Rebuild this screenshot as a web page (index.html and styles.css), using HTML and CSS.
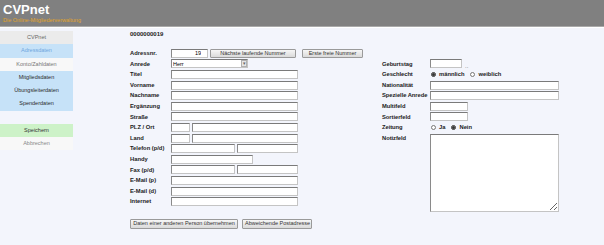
FILE: index.html
```html
<!DOCTYPE html>
<html lang="de">
<head>
    <meta charset="UTF-8">
    <meta name="viewport" content="width=device-width, initial-scale=1.0">
    <title>CVPnet - Adressdaten</title>
    <link rel="stylesheet" href="styles.css">
</head>
<body>
    <header class="topbar">
        <div class="brand">CVPnet</div>
        <div class="tagline">Die Online-Mitgliederverwaltung</div>
    </header>
    <div class="page">
        <nav class="sidemenu">
            <a class="menu-item menu-home">CVPnet</a>
            <a class="menu-item menu-active">Adressdaten</a>
            <a class="menu-item menu-plain">Konto/Zahldaten</a>
            <a class="menu-item menu-blue">Mitgliedsdaten</a>
            <a class="menu-item menu-blue">Übungsleiterdaten</a>
            <a class="menu-item menu-blue">Spenderdaten</a>
            <div class="menu-gap"></div>
            <a class="menu-item menu-save">Speichern</a>
            <a class="menu-item menu-cancel">Abbrechen</a>
        </nav>
        <main class="content">
            <div class="record-id">0000000019</div>
            <form class="form-grid">
                <label class="lbl c1">Adressnr.</label>
                <div class="field wide-row">
                    <input type="text" class="inp w-nr" value="19">
                    <button type="button" class="btn w-next">Nächste laufende Nummer</button>
                    <button type="button" class="btn w-free">Erste freie Nummer</button>
                </div>

                <label class="lbl c1">Anrede</label>
                <div class="field c2">
                    <span class="select-box">
                        <select class="inp w-select">
                            <option>Herr</option>
                            <option>Frau</option>
                        </select>
                        <span class="select-arrow">▾</span>
                    </span>
                </div>
                <label class="lbl c3">Geburtstag</label>
                <div class="field c4"><input type="text" class="inp w-date"><span class="dots">..</span></div>

                <label class="lbl c1">Titel</label>
                <div class="field c2"><input type="text" class="inp w-full"></div>
                <label class="lbl c3">Geschlecht</label>
                <div class="field c4">
                    <input type="radio" name="sex" checked><span class="opt">männlich</span>
                    <input type="radio" name="sex"><span class="opt">weiblich</span>
                </div>

                <label class="lbl c1">Vorname</label>
                <div class="field c2"><input type="text" class="inp w-full"></div>
                <label class="lbl c3">Nationalität</label>
                <div class="field c4"><input type="text" class="inp w-right"></div>

                <label class="lbl c1">Nachname</label>
                <div class="field c2"><input type="text" class="inp w-full"></div>
                <label class="lbl c3">Spezielle Anrede</label>
                <div class="field c4"><input type="text" class="inp w-right"></div>

                <label class="lbl c1">Ergänzung</label>
                <div class="field c2"><input type="text" class="inp w-full"></div>
                <label class="lbl c3">Multifeld</label>
                <div class="field c4"><input type="text" class="inp w-short"></div>

                <label class="lbl c1">Straße</label>
                <div class="field c2"><input type="text" class="inp w-full"></div>
                <label class="lbl c3">Sortierfeld</label>
                <div class="field c4"><input type="text" class="inp w-short"></div>

                <label class="lbl c1">PLZ / Ort</label>
                <div class="field c2"><input type="text" class="inp w-zip"><input type="text" class="inp w-city"></div>
                <label class="lbl c3">Zeitung</label>
                <div class="field c4">
                    <input type="radio" name="paper"><span class="opt">Ja</span>
                    <input type="radio" name="paper" checked><span class="opt">Nein</span>
                </div>

                <label class="lbl c1">Land</label>
                <div class="field c2"><input type="text" class="inp w-zip"><input type="text" class="inp w-city"></div>
                <label class="lbl c3">Notizfeld</label>
                <textarea class="notes"></textarea>

                <label class="lbl c1">Telefon (p/d)</label>
                <div class="field c2"><input type="text" class="inp w-half"><input type="text" class="inp w-half2"></div>

                <label class="lbl c1">Handy</label>
                <div class="field c2"><input type="text" class="inp w-mobile"></div>

                <label class="lbl c1">Fax (p/d)</label>
                <div class="field c2"><input type="text" class="inp w-half"><input type="text" class="inp w-half2"></div>

                <label class="lbl c1">E-Mail (p)</label>
                <div class="field c2"><input type="text" class="inp w-full"></div>

                <label class="lbl c1">E-Mail (d)</label>
                <div class="field c2"><input type="text" class="inp w-full"></div>

                <label class="lbl c1">Internet</label>
                <div class="field c2"><input type="text" class="inp w-full"></div>
            </form>
            <div class="bottom-buttons">
                <button type="button" class="btn w-copy">Daten einer anderen Person übernehmen</button>
                <button type="button" class="btn w-post">Abweichende Postadresse</button>
            </div>
        </main>
    </div>
</body>
</html>
```

FILE: styles.css
```css
body { margin: 0; background: #f3f5fc; font-family: "Liberation Sans", Arial, sans-serif; color: #222; }

/* header */
.topbar { background: #808080; height: 26px; border-bottom: 1px solid #a9a9a9; box-shadow: 0 1px 0 #fff; padding-left: 3px; }
.brand { color: #fff; font-weight: bold; font-size: 13px; line-height: 14px; padding-top: 3px; }
.tagline { color: #e0a428; font-size: 5.5px; line-height: 7px; }

.page { display: flex; padding-top: 4px; }

/* left menu */
.sidemenu { width: 73px; display: flex; flex-direction: column; flex-shrink: 0; }
.menu-item { height: 13.3px; line-height: 13.3px; text-align: center; font-size: 5.5px; color: #333; }
.menu-home { background: #ebebeb; color: #666; }
.menu-active { background: #c6e2f8; color: #6fa6de; }
.menu-plain { background: #f8f8f8; color: #777; }
.menu-blue { background: #c6e2f8; color: #2a2a2a; }
.menu-gap { height: 13px; }
.menu-save { background: #cdf2c8; color: #333; }
.menu-cancel { background: #f8f8f8; color: #888; }

/* form */
.content { margin-left: 57px; }
.record-id { font-weight: bold; font-size: 6px; line-height: 7px; }
.form-grid { display: grid; grid-template-columns: 41px 211px 48px 129px; grid-template-rows: repeat(15, 10.6px); margin-top: 10px; }
.lbl { font-weight: bold; font-size: 5.8px; line-height: 10.6px; white-space: nowrap; color: #222; }
.c1 { grid-column: 1; }
.c2 { grid-column: 2; }
.c3 { grid-column: 3; letter-spacing: -0.05px; }
.c4 { grid-column: 4; }
.wide-row { grid-column: 2 / span 3; }
.field { display: flex; align-items: center; gap: 2px; height: 10.6px; }

.inp { box-sizing: border-box; height: 9px; margin: 0; padding: 0 1px; font-size: 5.5px; font-family: inherit; background: #fff; border: 1px solid #c4c4c4; border-top-color: #7a7a7a; border-left-color: #8a8a8a; border-radius: 0; outline: none; }
.w-nr { width: 37px; text-align: right; padding-right: 6px; }
.w-full { width: 127px; }
.w-right { width: 129px; }
.w-date { width: 32px; }
.w-short { width: 38px; }
.w-zip { width: 19px; }
.w-city { width: 106px; }
.w-half { width: 64px; }
.w-half2 { width: 61px; }
.w-mobile { width: 82px; }

.select-box { position: relative; display: flex; align-items: center; }
.w-select { width: 77px; appearance: none; -webkit-appearance: none; }
.select-arrow { position: absolute; right: 1px; top: 1px; width: 6px; height: 7px; box-sizing: border-box; border: 1px solid #b0b0b0; background: #e6e6e6; font-size: 5px; line-height: 5px; text-align: center; color: #666; }

.dots { font-size: 6px; color: #666; align-self: flex-end; margin-left: 1px; }
.field input[type="radio"] { width: 5px; height: 5px; margin: 0 1px 0 1px; accent-color: #333; }
.opt { font-size: 5.8px; font-weight: bold; margin-right: 3px; }

.notes { grid-column: 4; grid-row: 9 / span 7; box-sizing: border-box; width: 129px; height: 78px; margin-top: 1px; border: 1px solid #c4c4c4; border-top-color: #7a7a7a; border-left-color: #8a8a8a; background: #fff; resize: both; }

/* buttons */
.btn { box-sizing: border-box; height: 9px; margin: 0; padding: 0 2px; font-size: 5.5px; line-height: 7px; font-family: inherit; color: #333; background: linear-gradient(#f6f6f6, #dadada); border: 1px solid #9a9a9a; border-radius: 1px; white-space: nowrap; }
.w-next { width: 86px; }
.w-free { width: 61px; margin-left: 4px; }
.bottom-buttons { display: flex; gap: 4px; margin-top: 12px; }
.w-copy { width: 108px; height: 10px; }
.w-post { width: 70px; height: 10px; }
```
